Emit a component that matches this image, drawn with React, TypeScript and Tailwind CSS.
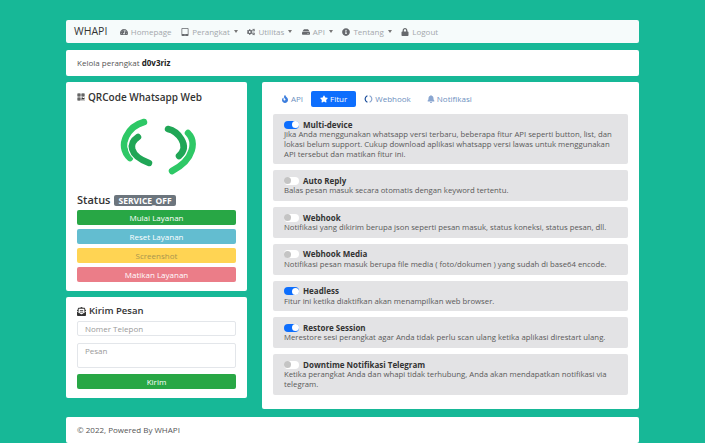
import { FaTachometerAlt, FaTabletAlt, FaCogs, FaHdd, FaInfoCircle, FaLock, FaFire, FaStar, FaBell, FaQrcode, FaEnvelopeOpenText } from "react-icons/fa";

const font = { fontFamily: '"Open Sans", "Noto Sans", sans-serif' };

const features = [
  { name: "Multi-device", on: true, text: "Jika Anda menggunakan whatsapp versi terbaru, beberapa fitur API seperti button, list, dan lokasi belum support. Cukup download aplikasi whatsapp versi lawas untuk menggunakan API tersebut dan matikan fitur ini." },
  { name: "Auto Reply", on: false, text: "Balas pesan masuk secara otomatis dengan keyword tertentu." },
  { name: "Webhook", on: false, text: "Notifikasi yang dikirim berupa json seperti pesan masuk, status koneksi, status pesan, dll." },
  { name: "Webhook Media", on: false, text: "Notifikasi pesan masuk berupa file media ( foto/dokumen ) yang sudah di base64 encode." },
  { name: "Headless", on: true, text: "Fitur ini ketika diaktifkan akan menampilkan web browser." },
  { name: "Restore Session", on: true, text: "Merestore sesi perangkat agar Anda tidak perlu scan ulang ketika aplikasi direstart ulang." },
  { name: "Downtime Notifikasi Telegram", on: false, text: "Ketika perangkat Anda dan whapi tidak terhubung, Anda akan mendapatkan notifikasi via telegram." },
];

function NavItem({ icon, label, caret }: { icon: React.ReactNode; label: string; caret?: boolean }) {
  return (
    <span className="flex items-center gap-[3px] text-[8px] text-[#a3a7ab]">
      <span className="text-[8px] text-[#66696d]">{icon}</span>
      {label}
      {caret && <span className="ml-[1px] border-x-[2.5px] border-t-[3px] border-x-transparent border-t-[#777]" />}
    </span>
  );
}

function Toggle({ on }: { on: boolean }) {
  return (
    <span className={`flex h-[8px] w-[15px] items-center rounded-full ${on ? "justify-end bg-[#0d6efd]" : "justify-start bg-white"}`}>
      <span className={`h-[7px] w-[7px] rounded-full ${on ? "bg-white" : "bg-[#c4c4c4]"}`} />
    </span>
  );
}

function Btn({ label, color }: { label: string; color: string }) {
  return <div className={`flex h-[15px] items-center justify-center rounded-[2px] text-[8px] ${color}`}>{label}</div>;
}

function Logo() {
  return (
    <svg width="80" height="58" viewBox="0 0 80 58" fill="none" strokeLinecap="round">
      <path d="M27 5 C12 9 -1 28 13 41" stroke="#2ec866" strokeWidth="6.5" />
      <path d="M21 20 C12 26 11 38 32 46" stroke="#ffffff" strokeWidth="8.5" />
      <path d="M21 20 C12 26 11 38 32 46" stroke="#20a656" strokeWidth="6.5" />
      <path d="M71 16 C79 24 78 42 55 54" stroke="#2ec866" strokeWidth="6.5" />
      <path d="M51 12 C60 14 74 28 62 39" stroke="#ffffff" strokeWidth="8.5" />
      <path d="M51 12 C60 14 74 28 62 39" stroke="#20a656" strokeWidth="6.5" />
    </svg>
  );
}

function WebhookIcon() {
  return (
    <svg width="9" height="8" viewBox="0 0 9 8" fill="none" strokeLinecap="round" strokeWidth="1.2">
      <path d="M3 1 C0.5 2.5 0.5 5.5 3 7" stroke="#1c4f9c" />
      <path d="M6 1 C8.5 2.5 8.5 5.5 6 7" stroke="#8aa6d0" />
    </svg>
  );
}

export default function App() {
  return (
    <div style={font} className="flex h-[443px] w-[705px] flex-col overflow-hidden bg-[#17b897] px-[66px] pt-[20px] text-[#444]">
      <nav className="flex h-[23px] items-center gap-[9.5px] rounded-[2px] bg-[#f6fbfb] px-[8px]">
        <span className="mr-[3px] text-[10.5px] text-[#333]">WHAPI</span>
        <NavItem icon={<FaTachometerAlt />} label="Homepage" />
        <NavItem icon={<FaTabletAlt />} label="Perangkat" caret />
        <NavItem icon={<FaCogs />} label="Utilitas" caret />
        <NavItem icon={<FaHdd />} label="API" caret />
        <NavItem icon={<FaInfoCircle />} label="Tentang" caret />
        <NavItem icon={<FaLock />} label="Logout" />
      </nav>
      <div className="mt-[7px] flex h-[26px] items-center rounded-[2px] bg-white px-[11px] text-[8px] text-[#555]">
        <span>Kelola perangkat <b className="text-[#222]">d0v3riz</b></span>
      </div>
      <div className="mt-[6px] flex gap-[15px]">
        <div className="flex w-[181px] flex-col gap-[6px]">
          <section className="flex h-[209px] flex-col rounded-[2px] bg-white px-[11px] pt-[8px]">
            <h2 className="flex h-[14px] items-center gap-[3px] text-[10px] font-semibold text-[#333]"><FaQrcode className="text-[8px]" /> QRCode Whatsapp Web</h2>
            <div className="mt-[13px] flex justify-center"><Logo /></div>
            <div className="mt-[18px] flex h-[15px] items-center gap-[4px]">
              <span className="text-[11px] font-semibold text-[#333]">Status</span>
              <span className="rounded-[2px] bg-[#6c757d] px-[4px] text-[8.5px] font-bold leading-[11px] text-white">SERVICE_OFF</span>
            </div>
            <div className="mt-[2px] flex flex-col gap-[4px]">
              <Btn label="Mulai Layanan" color="bg-[#28a745] text-white" />
              <Btn label="Reset Layanan" color="bg-[#63bdd0] text-white" />
              <Btn label="Screenshot" color="bg-[#ffd453] text-[#a8954f]" />
              <Btn label="Matikan Layanan" color="bg-[#eb7d88] text-white" />
            </div>
          </section>
          <section className="flex h-[101px] flex-col rounded-[2px] bg-white px-[11px] pt-[8px]">
            <h2 className="flex h-[13px] items-center gap-[3px] text-[9.5px] font-semibold text-[#333]"><FaEnvelopeOpenText className="text-[9px]" /> Kirim Pesan</h2>
            <div className="mt-[3px] flex h-[15px] items-center rounded-[2px] border border-[#e3e6ea] px-[7px] text-[8px] text-[#999]">Nomer Telepon</div>
            <div className="mt-[7px] h-[25px] rounded-[2px] border border-[#e3e6ea] px-[7px] pt-[1px] text-[8px] text-[#999]">Pesan</div>
            <div className="mt-[6px]"><Btn label="Kirim" color="bg-[#28a745] text-white" /></div>
          </section>
        </div>
        <section className="h-[327px] flex-1 rounded-[2px] bg-white px-[11px] pt-[9px]">
          <div className="flex h-[16px] items-center text-[8px] text-[#6d8fc0]">
            <span className="flex items-center gap-[2px] px-[8px]"><FaFire className="text-[#3b7ddd]" /> API</span>
            <span className="flex h-[16px] items-center gap-[2px] rounded-[2px] bg-[#0d6efd] px-[9px] text-white"><FaStar /> Fitur</span>
            <span className="flex items-center gap-[2px] px-[8px]"><WebhookIcon /> Webhook</span>
            <span className="flex items-center gap-[2px] px-[8px]"><FaBell className="text-[#8aa6d0]" /> Notifikasi</span>
          </div>
          <div className="mt-[7px] flex flex-col gap-[6px]">
            {features.map((f) => (
              <div key={f.name} className="rounded-[2px] bg-[#e3e3e5] px-[11px] py-[5px] text-[7.75px] leading-[9.75px] text-[#5a5a5a]">
                <div className="flex h-[11px] items-center gap-[4px] text-[8px] font-bold text-[#333]"><Toggle on={f.on} />{f.name}</div>
                <p>{f.text}</p>
              </div>
            ))}
          </div>
        </section>
      </div>
      <footer className="mt-[8px] flex h-[26px] items-center rounded-[2px] bg-white px-[11px] text-[8px] text-[#555]">© 2022, Powered By WHAPI</footer>
    </div>
  );
}
